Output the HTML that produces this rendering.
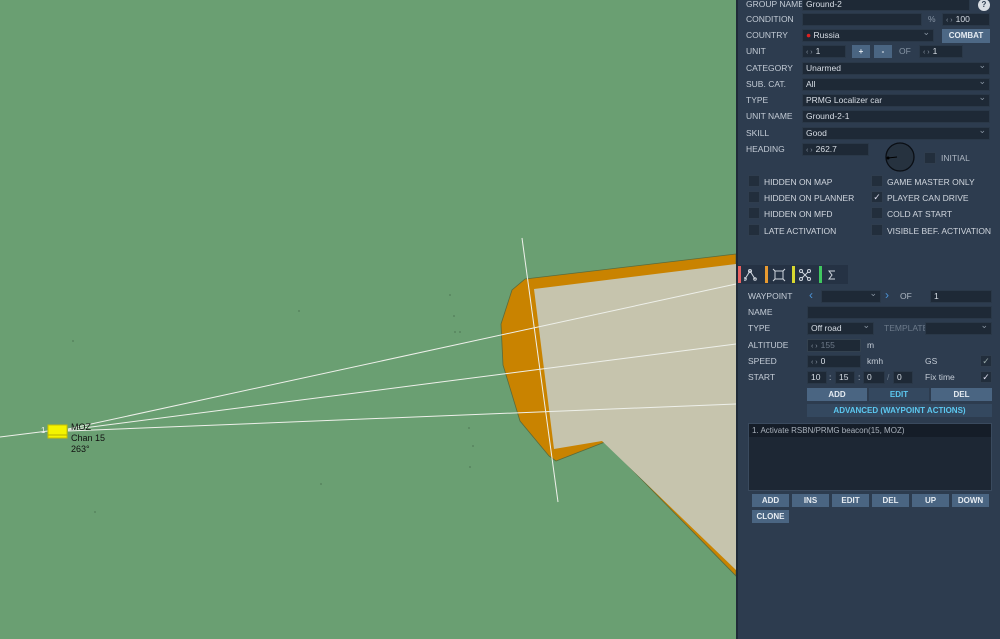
<!DOCTYPE html>
<html><head><meta charset="utf-8"><style>
*{box-sizing:border-box;margin:0;padding:0}
body{width:1000px;height:639px;overflow:hidden;background:#6a9f72;font-family:"Liberation Sans","DejaVu Sans",sans-serif;position:relative}
#p{position:absolute;left:736px;top:0;width:264px;height:639px;background:#2d3c4f;border-left:2px solid #1f2a38}
.a{position:absolute}
.l{position:absolute;font-size:8.5px;line-height:13px;color:#c4ccd6;white-space:nowrap}
.i{position:absolute;background:#1e2936;border:1px solid #2a3848;height:13px;font-size:8.5px;color:#d8dee6;padding-left:3px;line-height:11px;white-space:nowrap;overflow:hidden}
.i .ar{color:#8a96a4;font-size:7px;margin-right:3px}
.dd::after{content:"⌄";position:absolute;right:3px;top:-3px;color:#8a96a4;font-size:9px}
.b{position:absolute;background:#4a6582;color:#e6ecf2;font-size:8px;font-weight:bold;text-align:center;height:13px;line-height:13px}
.cb{position:absolute;width:12px;height:12px;background:#222e3c;border:1px solid #2f3d4e;color:#dde;font-size:9px;line-height:10px;text-align:center}
.cl{position:absolute;font-size:8.5px;line-height:12px;color:#d0d6de;white-space:nowrap}
</style></head><body>
<svg class="a" style="left:0;top:0" width="736" height="639">
<polygon points="525,279 736,254 736,576 605,442 556,461 549,456 520,421 503,365 501,324 512,290" fill="#c98300" stroke="#5a6b3c" stroke-width="0.8"/>
<polygon points="534,289 736,264 736,570 602,441 554,449" fill="#c6c4ad"/>
<g stroke="#eef0ea" stroke-width="1" fill="none">
<line x1="0" y1="437" x2="48" y2="431"/>
<line x1="68" y1="429" x2="736" y2="284"/>
<line x1="68" y1="430" x2="736" y2="344"/>
<line x1="68" y1="431" x2="736" y2="404"/>
<line x1="522" y1="238" x2="558" y2="502"/>
</g>
<rect x="48" y="425" width="19" height="13" fill="#f4f400" stroke="#c8c000" stroke-width="1"/>
<line x1="48" y1="435" x2="67" y2="435" stroke="#b8b000"/>
<text x="41" y="433" font-size="8" fill="#eee" font-family="Liberation Sans">1</text>
<text x="71" y="430" font-size="9" fill="#111" font-family="Liberation Sans">MOZ</text>
<text x="71" y="441" font-size="9" fill="#111" font-family="Liberation Sans">Chan 15</text>
<text x="71" y="452" font-size="9" fill="#111" font-family="Liberation Sans">263°</text>
<g fill="#3c5a40"><circle cx="299" cy="311" r=".6"/><circle cx="450" cy="295" r=".6"/><circle cx="455" cy="332" r=".6"/><circle cx="460" cy="332" r=".6"/><circle cx="73" cy="341" r=".6"/><circle cx="469" cy="428" r=".6"/><circle cx="473" cy="446" r=".6"/><circle cx="470" cy="467" r=".6"/><circle cx="321" cy="484" r=".6"/><circle cx="95" cy="512" r=".6"/><circle cx="454" cy="316" r=".6"/></g>
</svg>
<div id="p">
<div class="l" style="left:8px;top:-2px">GROUP NAME</div><div class="i" style="left:64px;top:-2px;width:168px">Ground-2</div>
<div class="a" style="left:240px;top:-1px;width:12px;height:12px;border-radius:50%;background:#d8dde3;color:#2c3b4e;font-size:8px;font-weight:bold;text-align:center;line-height:12px">?</div>
<div class="l" style="left:8px;top:13px">CONDITION</div><div class="i" style="left:64px;top:13px;width:120px"></div>
<div class="l" style="left:190px;top:13px;color:#8896a6">%</div><div class="i" style="left:204px;top:13px;width:48px"><span class="ar">‹ ›</span>100</div>
<div class="l" style="left:8px;top:29px">COUNTRY</div><div class="i dd" style="left:64px;top:29px;width:132px"><span style="color:#e02020">●</span> Russia</div>
<div class="b" style="left:204px;top:29px;width:48px;height:14px;line-height:14px;background:#4d6885">COMBAT</div>
<div class="l" style="left:8px;top:45px">UNIT</div><div class="i" style="left:64px;top:45px;width:44px"><span class="ar">‹ ›</span>1</div>
<div class="b" style="left:114px;top:45px;width:18px">+</div><div class="b" style="left:136px;top:45px;width:18px">-</div>
<div class="l" style="left:161px;top:45px;color:#8896a6">OF</div><div class="i" style="left:181px;top:45px;width:44px"><span class="ar">‹ ›</span>1</div>
<div class="l" style="left:8px;top:62px">CATEGORY</div><div class="i dd" style="left:64px;top:62px;width:188px">Unarmed</div>
<div class="l" style="left:8px;top:78px">SUB. CAT.</div><div class="i dd" style="left:64px;top:78px;width:188px">All</div>
<div class="l" style="left:8px;top:94px">TYPE</div><div class="i dd" style="left:64px;top:94px;width:188px">PRMG Localizer car</div>
<div class="l" style="left:8px;top:110px">UNIT NAME</div><div class="i" style="left:64px;top:110px;width:188px">Ground-2-1</div>
<div class="l" style="left:8px;top:127px">SKILL</div><div class="i dd" style="left:64px;top:127px;width:188px">Good</div>
<div class="l" style="left:8px;top:143px">HEADING</div><div class="i" style="left:64px;top:143px;width:67px"><span class="ar">‹ ›</span>262.7</div>
<svg class="a" style="left:146px;top:142px" width="32" height="30"><circle cx="16" cy="15" r="14" fill="#26323f" stroke="#0a0e14" stroke-width="1.3"/><line x1="4" y1="16" x2="13" y2="15" stroke="#000" stroke-width="1"/><circle cx="4" cy="16" r="1.5" fill="#000"/></svg>
<div class="cb" style="left:186px;top:152px"></div><div class="cl" style="left:203px;top:152px;color:#aeb7c2">INITIAL</div>
<div class="cb" style="left:10px;top:175px"></div><div class="cl" style="left:26px;top:176px">HIDDEN ON MAP</div>
<div class="cb" style="left:10px;top:191px"></div><div class="cl" style="left:26px;top:192px">HIDDEN ON PLANNER</div>
<div class="cb" style="left:10px;top:207px"></div><div class="cl" style="left:26px;top:208px">HIDDEN ON MFD</div>
<div class="cb" style="left:10px;top:224px"></div><div class="cl" style="left:26px;top:225px">LATE ACTIVATION</div>
<div class="cb" style="left:133px;top:175px"></div><div class="cl" style="left:149px;top:176px">GAME MASTER ONLY</div>
<div class="cb" style="left:133px;top:191px">✓</div><div class="cl" style="left:149px;top:192px">PLAYER CAN DRIVE</div>
<div class="cb" style="left:133px;top:207px"></div><div class="cl" style="left:149px;top:208px">COLD AT START</div>
<div class="cb" style="left:133px;top:224px"></div><div class="cl" style="left:149px;top:225px">VISIBLE BEF. ACTIVATION</div>
<div class="a" style="left:0;top:265px;width:110px;height:19px;background:#253244"></div>
<div class="a" style="left:0;top:266px;width:3px;height:17px;background:#e86060"></div>
<div class="a" style="left:27px;top:266px;width:3px;height:17px;background:#e89a30"></div>
<div class="a" style="left:54px;top:266px;width:3px;height:17px;background:#d8d830"></div>
<div class="a" style="left:81px;top:266px;width:3px;height:17px;background:#40c860"></div>
<svg class="a" style="left:6px;top:268px" width="100" height="14" fill="none" stroke="#d0d6de" stroke-width="1">
<path d="M1,11 L6,3 L11,11"/><circle cx="6" cy="3" r="1.5"/><circle cx="1" cy="11" r="1.3"/><circle cx="11" cy="11" r="1.3"/>
<rect x="31" y="3" width="8" height="8"/><path d="M29,1 L31,3 M41,1 L39,3 M29,13 L31,11 M41,13 L39,11"/>
<path d="M58,4 L64,10 M64,4 L58,10"/><circle cx="57" cy="3" r="1.5"/><circle cx="65" cy="3" r="1.5"/><circle cx="57" cy="11" r="1.5"/><circle cx="65" cy="11" r="1.5"/>
<path d="M91,3 L85,3 L88,7 L85,11 L91,11"/></svg>
<div class="l" style="left:10px;top:290px">WAYPOINT</div>
<div class="l" style="left:71px;top:289px;font-size:12px;color:#4c94d8">‹</div>
<div class="i dd" style="left:83px;top:290px;width:60px"></div>
<div class="l" style="left:147px;top:289px;font-size:12px;color:#4c94d8">›</div>
<div class="l" style="left:162px;top:290px;color:#aeb7c2">OF</div><div class="i" style="left:192px;top:290px;width:62px">1</div>
<div class="l" style="left:10px;top:306px">NAME</div><div class="i" style="left:69px;top:306px;width:185px"></div>
<div class="l" style="left:10px;top:322px">TYPE</div><div class="i dd" style="left:69px;top:322px;width:67px">Off road</div>
<div class="l" style="left:146px;top:322px;color:#6c7a8a">TEMPLATE</div><div class="i dd" style="left:187px;top:322px;width:67px"></div>
<div class="l" style="left:10px;top:339px">ALTITUDE</div><div class="i" style="left:69px;top:339px;width:54px;color:#6c7888;border-color:#33414f"><span class="ar">‹ ›</span>155</div>
<div class="l" style="left:129px;top:339px">m</div>
<div class="l" style="left:10px;top:355px">SPEED</div><div class="i" style="left:69px;top:355px;width:54px"><span class="ar">‹ ›</span>0</div>
<div class="l" style="left:129px;top:355px">kmh</div><div class="l" style="left:187px;top:355px">GS</div>
<div class="cb" style="left:242px;top:355px;color:#9aa">✓</div>
<div class="l" style="left:10px;top:371px">START</div>
<div class="i" style="left:69px;top:371px;width:20px">10</div><div class="l" style="left:91px;top:371px">:</div>
<div class="i" style="left:97px;top:371px;width:20px">15</div><div class="l" style="left:120px;top:371px">:</div>
<div class="i" style="left:125px;top:371px;width:22px">0</div><div class="l" style="left:149px;top:371px;color:#6c7a8a">/</div>
<div class="i" style="left:155px;top:371px;width:20px">0</div>
<div class="l" style="left:187px;top:371px">Fix time</div><div class="cb" style="left:242px;top:371px">✓</div>
<div class="b" style="left:69px;top:388px;width:60px">ADD</div>
<div class="b" style="left:131px;top:388px;width:60px;background:#34485f;color:#5cc8f0">EDIT</div>
<div class="b" style="left:193px;top:388px;width:61px">DEL</div>
<div class="b" style="left:69px;top:404px;width:185px;background:#34485f;color:#5cc8f0">ADVANCED (WAYPOINT ACTIONS)</div>
<div class="a" style="left:10px;top:423px;width:244px;height:68px;background:#1d2734;border:1px solid #3a4a5e"></div>
<div class="a" style="left:11px;top:424px;width:242px;height:13px;background:#151d28;font-size:8px;color:#aab2bc;padding:2px 0 0 3px">1. Activate RSBN/PRMG beacon(15, MOZ)</div>
<div class="b" style="left:14px;top:494px;width:37px">ADD</div>
<div class="b" style="left:54px;top:494px;width:37px">INS</div>
<div class="b" style="left:94px;top:494px;width:37px">EDIT</div>
<div class="b" style="left:134px;top:494px;width:37px">DEL</div>
<div class="b" style="left:174px;top:494px;width:37px">UP</div>
<div class="b" style="left:214px;top:494px;width:37px">DOWN</div>
<div class="b" style="left:14px;top:510px;width:37px">CLONE</div>
</div>
</body></html>
